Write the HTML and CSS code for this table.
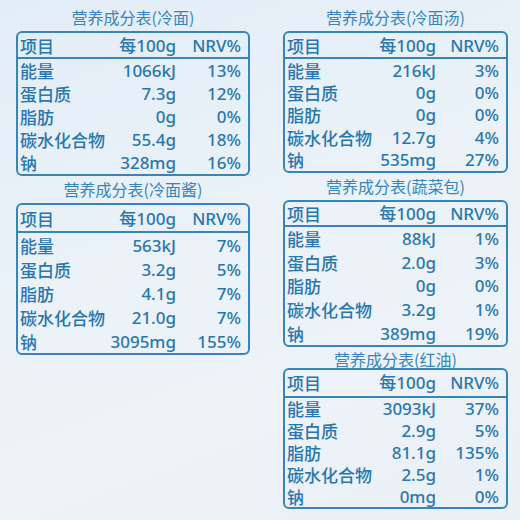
FILE: index.html
```html
<!DOCTYPE html>
<html lang="zh-CN">
<head>
<meta charset="utf-8">
<title>营养成分表</title>
<link rel="stylesheet" href="styles.css">
</head>
<body>
<div class="page">
  <div class="col col-left">
    <section class="panel">
      <h2 class="title">营养成分表(冷面)</h2>
      <div class="box box-l1">
        <div class="row head"><span class="name">项目</span><span class="amt">每100g</span><span class="nrv">NRV%</span></div>
        <div class="row"><span class="name">能量</span><span class="amt">1066kJ</span><span class="nrv">13%</span></div>
        <div class="row"><span class="name">蛋白质</span><span class="amt">7.3g</span><span class="nrv">12%</span></div>
        <div class="row"><span class="name">脂肪</span><span class="amt">0g</span><span class="nrv">0%</span></div>
        <div class="row"><span class="name">碳水化合物</span><span class="amt">55.4g</span><span class="nrv">18%</span></div>
        <div class="row"><span class="name">钠</span><span class="amt">328mg</span><span class="nrv">16%</span></div>
      </div>
    </section>
    <section class="panel panel-l2">
      <h2 class="title">营养成分表(冷面酱)</h2>
      <div class="box box-l2">
        <div class="row head"><span class="name">项目</span><span class="amt">每100g</span><span class="nrv">NRV%</span></div>
        <div class="row"><span class="name">能量</span><span class="amt">563kJ</span><span class="nrv">7%</span></div>
        <div class="row"><span class="name">蛋白质</span><span class="amt">3.2g</span><span class="nrv">5%</span></div>
        <div class="row"><span class="name">脂肪</span><span class="amt">4.1g</span><span class="nrv">7%</span></div>
        <div class="row"><span class="name">碳水化合物</span><span class="amt">21.0g</span><span class="nrv">7%</span></div>
        <div class="row"><span class="name">钠</span><span class="amt">3095mg</span><span class="nrv">155%</span></div>
      </div>
    </section>
  </div>
  <div class="col col-right">
    <section class="panel">
      <h2 class="title">营养成分表(冷面汤)</h2>
      <div class="box box-r1">
        <div class="row head"><span class="name">项目</span><span class="amt">每100g</span><span class="nrv">NRV%</span></div>
        <div class="row"><span class="name">能量</span><span class="amt">216kJ</span><span class="nrv">3%</span></div>
        <div class="row"><span class="name">蛋白质</span><span class="amt">0g</span><span class="nrv">0%</span></div>
        <div class="row"><span class="name">脂肪</span><span class="amt">0g</span><span class="nrv">0%</span></div>
        <div class="row"><span class="name">碳水化合物</span><span class="amt">12.7g</span><span class="nrv">4%</span></div>
        <div class="row"><span class="name">钠</span><span class="amt">535mg</span><span class="nrv">27%</span></div>
      </div>
    </section>
    <section class="panel panel-r2">
      <h2 class="title">营养成分表(蔬菜包)</h2>
      <div class="box box-r2">
        <div class="row head"><span class="name">项目</span><span class="amt">每100g</span><span class="nrv">NRV%</span></div>
        <div class="row"><span class="name">能量</span><span class="amt">88kJ</span><span class="nrv">1%</span></div>
        <div class="row"><span class="name">蛋白质</span><span class="amt">2.0g</span><span class="nrv">3%</span></div>
        <div class="row"><span class="name">脂肪</span><span class="amt">0g</span><span class="nrv">0%</span></div>
        <div class="row"><span class="name">碳水化合物</span><span class="amt">3.2g</span><span class="nrv">1%</span></div>
        <div class="row"><span class="name">钠</span><span class="amt">389mg</span><span class="nrv">19%</span></div>
      </div>
    </section>
    <section class="panel panel-r3">
      <h2 class="title">营养成分表(红油)</h2>
      <div class="box box-r3">
        <div class="row head"><span class="name">项目</span><span class="amt">每100g</span><span class="nrv">NRV%</span></div>
        <div class="row"><span class="name">能量</span><span class="amt">3093kJ</span><span class="nrv">37%</span></div>
        <div class="row"><span class="name">蛋白质</span><span class="amt">2.9g</span><span class="nrv">5%</span></div>
        <div class="row"><span class="name">脂肪</span><span class="amt">81.1g</span><span class="nrv">135%</span></div>
        <div class="row"><span class="name">碳水化合物</span><span class="amt">2.5g</span><span class="nrv">1%</span></div>
        <div class="row"><span class="name">钠</span><span class="amt">0mg</span><span class="nrv">0%</span></div>
      </div>
    </section>
  </div>
</div>
</body>
</html>
```

FILE: styles.css
```css
html, body {
  margin: 0;
  padding: 0;
}
body {
  width: 520px;
  height: 520px;
  overflow: hidden;
  background: linear-gradient(160deg, #e3edf6 0%, #eaf2f8 40%, #edf3f8 70%, #e9f0f6 100%);
  font-family: "Noto Sans", "Noto Sans CJK SC", sans-serif;
  color: #2a77ad;
}
.page {
  display: grid;
  grid-template-columns: 234px 225px;
  column-gap: 33px;
  padding-left: 16px;
}
.col {
  display: flex;
  flex-direction: column;
}
.col-left { padding-top: 8px; }
.col-right { padding-top: 8px; }
.panel {
  display: flex;
  flex-direction: column;
}
.panel-l2 { margin-top: 4px; }
.panel-r2 { margin-top: 4px; }
.panel-r3 { margin-top: 3px; }
.panel-r3 .title { margin-bottom: 0; }
.title {
  margin: 0 0 5px;
  font-family: "Noto Sans CJK SC", sans-serif;
  font-weight: 400;
  font-size: 16px;
  line-height: 18px;
  height: 18px;
  text-align: center;
  color: #3686bb;
}
.box {
  --hh: 24px;
  --rh: 23px;
  --nw: 65px;
  border: 2px solid #3a85b7;
  border-radius: 6px;
  display: flex;
  flex-direction: column;
}
.box-l1 { --hh: 24px; --rh: 23px; }
.box-l2 { --hh: 26px; --rh: 24px; }
.box-r1 { --hh: 24px; --rh: 22.4px; --nw: 63px; }
.box-r2 { --hh: 23px; --rh: 23.6px; --nw: 63px; }
.box-r3 { --hh: 26px; --rh: 21.8px; --nw: 63px; }
.row {
  display: flex;
  align-items: center;
  height: var(--rh);
  padding: 0 7px 0 2px;
  font-size: 17px;
  font-weight: 500;
  line-height: 1;
  white-space: nowrap;
}
.row.head {
  height: var(--hh);
  border-bottom: 2px solid #3a85b7;
}
.name {
  flex: 1;
  font-family: "Noto Sans CJK SC", sans-serif;
}
.amt {
  text-align: right;
}
.nrv {
  width: var(--nw);
  text-align: right;
}
```
